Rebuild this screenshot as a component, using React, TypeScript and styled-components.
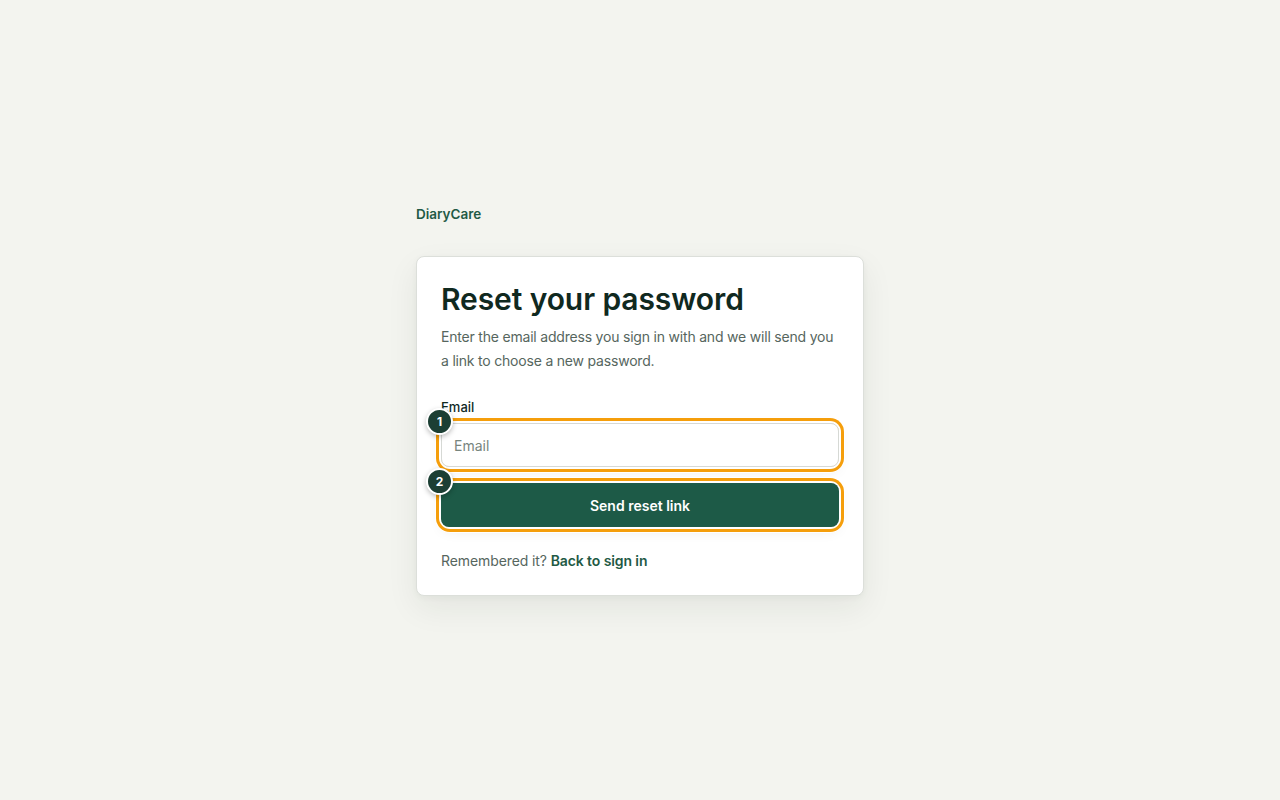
import React from "react";
import styled, { createGlobalStyle } from "styled-components";

const GlobalStyle = createGlobalStyle`
  * { box-sizing: border-box; }
  html, body { margin: 0; padding: 0; }
  body {
    background: #f3f4ef;
    font-family: Inter, "Noto Sans", "Liberation Sans", sans-serif;
    color: #10291f;
    -webkit-font-smoothing: antialiased;
  }
`;

const Page = styled.main`
  min-height: 100vh;
  display: flex;
  align-items: center;
  justify-content: center;
`;

const Column = styled.div`
  width: 448px;
  display: flex;
  flex-direction: column;
`;

const Brand = styled.div`
  font-size: 13.5px;
  line-height: 20px;
  font-weight: 600;
  color: #1f5a45;
  margin-bottom: 32px;
`;

const Card = styled.section`
  background: #ffffff;
  border: 1px solid #dcdfda;
  border-radius: 8px;
  padding: 23px 24px 24px;
  box-shadow: 0 12px 32px rgba(30, 45, 35, 0.07), 0 2px 6px rgba(30, 45, 35, 0.04);
  display: flex;
  flex-direction: column;
`;

const Title = styled.h1`
  margin: 0;
  font-size: 30px;
  line-height: 38px;
  font-weight: 600;
  letter-spacing: -0.1px;
  color: #10291f;
`;

const Description = styled.p`
  margin: 7px 0 0;
  font-size: 14px;
  line-height: 24px;
  letter-spacing: -0.2px;
  color: #56665e;
`;

const Form = styled.form`
  margin-top: 24px;
  display: flex;
  flex-direction: column;
`;

const Label = styled.label`
  font-size: 13px;
  line-height: 20px;
  font-weight: 500;
  color: #10291f;
  margin-bottom: 6px;
`;

const Highlight = styled.div<{ $gap?: number }>`
  position: relative;
  border-radius: 9px;
  margin-top: ${(p) => p.$gap ?? 0}px;
  box-shadow: 0 0 0 2px #ffffff, 0 0 0 5px #f59e0b, 0 0 0 6px rgba(255, 255, 255, 0.9),
    0 4px 14px rgba(0, 0, 0, 0.08);
`;

const Badge = styled.span`
  position: absolute;
  left: -15px;
  top: -15px;
  width: 27px;
  height: 27px;
  border-radius: 50%;
  background: #1c3f34;
  border: 2px solid #ffffff;
  box-shadow: 0 2px 5px rgba(0, 0, 0, 0.25);
  color: #ffffff;
  font-size: 12px;
  font-weight: 700;
  display: flex;
  align-items: center;
  justify-content: center;
  z-index: 2;
`;

const Input = styled.input`
  display: block;
  width: 100%;
  height: 44px;
  border: 1px solid #d6d9d5;
  border-radius: 8px;
  padding: 0 12px;
  font-family: inherit;
  font-size: 14px;
  color: #10291f;
  background: #ffffff;
  outline: none;
  &::placeholder {
    color: #77857e;
  }
`;

const Button = styled.button`
  display: block;
  width: 100%;
  height: 44px;
  border: none;
  border-radius: 8px;
  background: #1d5a47;
  color: #ffffff;
  font-family: inherit;
  font-size: 14px;
  font-weight: 600;
  cursor: pointer;
`;

const Footer = styled.p`
  margin: 24px 0 0;
  font-size: 14px;
  line-height: 20px;
  letter-spacing: -0.1px;
  color: #56665e;
`;

const Link = styled.a`
  color: #1f5a45;
  font-weight: 600;
  text-decoration: none;
`;

export default function App() {
  return (
    <>
      <GlobalStyle />
      <Page>
        <Column>
          <Brand>DiaryCare</Brand>
          <Card>
            <Title>Reset your password</Title>
            <Description>
              Enter the email address you sign in with and we will send you a link to choose a new
              password.
            </Description>
            <Form onSubmit={(e) => e.preventDefault()}>
              <Label htmlFor="email">Email</Label>
              <Highlight>
                <Badge>1</Badge>
                <Input id="email" type="email" placeholder="Email" />
              </Highlight>
              <Highlight $gap={16}>
                <Badge>2</Badge>
                <Button type="submit">Send reset link</Button>
              </Highlight>
            </Form>
            <Footer>
              Remembered it? <Link href="#">Back to sign in</Link>
            </Footer>
          </Card>
        </Column>
      </Page>
    </>
  );
}
